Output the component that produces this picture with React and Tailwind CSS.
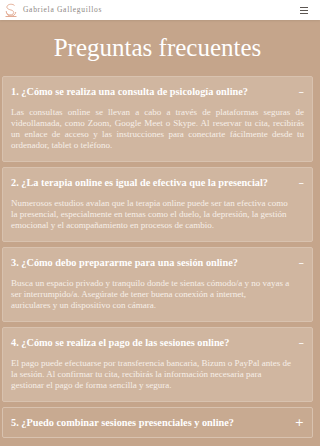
import { useState } from "react"

const faqs = [
	{
		q: "1. ¿Cómo se realiza una consulta de psicología online?",
		a: [
			"Las consultas online se llevan a cabo a través de plataformas seguras de",
			"videollamada, como Zoom, Google Meet o Skype. Al reservar tu cita, recibirás",
			"un enlace de acceso y las instrucciones para conectarte fácilmente desde tu",
			"ordenador, tablet o teléfono.",
		],
		justify: true,
	},
	{
		q: "2. ¿La terapia online es igual de efectiva que la presencial?",
		a: [
			"Numerosos estudios avalan que la terapia online puede ser tan efectiva como",
			"la presencial, especialmente en temas como el duelo, la depresión, la gestión",
			"emocional y el acompañamiento en procesos de cambio.",
		],
	},
	{
		q: "3. ¿Cómo debo prepararme para una sesión online?",
		a: [
			"Busca un espacio privado y tranquilo donde te sientas cómodo/a y no vayas a",
			"ser interrumpido/a. Asegúrate de tener buena conexión a internet,",
			"auriculares y un dispositivo con cámara.",
		],
	},
	{
		q: "4. ¿Cómo se realiza el pago de las sesiones online?",
		a: [
			"El pago puede efectuarse por transferencia bancaria, Bizum o PayPal antes de",
			"la sesión. Al confirmar tu cita, recibirás la información necesaria para",
			"gestionar el pago de forma sencilla y segura.",
		],
	},
	{
		q: "5. ¿Puedo combinar sesiones presenciales y online?",
		a: ["Sí, puedes alternar sesiones presenciales y online según tus necesidades."],
	},
]

function Logo() {
	return (
		<svg width="12" height="14" viewBox="0 0 12 14" fill="none" stroke="#e3ab93" strokeWidth="1">
			<path d="M9.5 2.5 C8 0.8 3 0.6 2 3.5 C1.3 5.5 4 6.5 6 7 C8.5 7.6 9.5 9.5 8 11 C6.5 12.5 3 12.3 2 10.5" />
			<path d="M1.2 8 C1.2 11.5 3.5 13 6 13 C8.5 13 10.5 11.5 10.8 9" />
			<path d="M0.5 13.5 H11.5" />
		</svg>
	)
}

function NavBar() {
	return (
		<nav className="bg-white h-[20px] flex items-center justify-between pl-[5px] pr-[12px] shadow-[0_1px_2px_rgba(0,0,0,0.08)] relative">
			<div className="flex items-center">
				<Logo />
				<span className="ml-[6px] text-[7.5px] tracking-[0.7px] text-[#8d8783] font-['Liberation_Serif',serif]">
					Gabriela Galleguillos
				</span>
			</div>
			<button className="flex flex-col gap-[2px] w-[8px]">
				<span className="h-[1px] w-full bg-[#5c5652]" />
				<span className="h-[1px] w-full bg-[#5c5652]" />
				<span className="h-[1px] w-full bg-[#5c5652]" />
			</button>
		</nav>
	)
}

function FaqItem({ item, open, onToggle }) {
	return (
		<div
			className={`border border-[#d8c2af] rounded-[2px] mb-[5px] ${open ? "bg-[#d0b6a0]" : "bg-[#c8aa91]"}`}>
			<button
				onClick={onToggle}
				className="w-full flex items-center justify-between pl-[8px] pr-[8px] h-[29px] text-left">
				<span className="text-white font-bold text-[10.3px] leading-[14px] font-['Liberation_Serif',serif]">
					{item.q}
				</span>
				<span className="text-white text-[11px] leading-none font-['DejaVu_Sans',sans-serif]">
					{open ? "–" : "+"}
				</span>
			</button>
			{open && (
				<p className="px-[8px] pb-[10px] pt-[1px] text-[9px] leading-[11px] text-[#f7efe8] font-['Liberation_Serif',serif]">
					{item.a.map((line, i) => (
						<span
							key={i}
							className={`block whitespace-nowrap ${
								item.justify && i < item.a.length - 1 ? "text-justify [text-align-last:justify]" : ""
							}`}>
							{line}
						</span>
					))}
				</p>
			)}
		</div>
	)
}

export default function App() {
	const [open, setOpen] = useState([true, true, true, true, false])

	return (
		<div className="min-h-[446px] bg-[#c5a58b]">
			<NavBar />
			<div className="w-[315px] px-[2px]">
				<h1 className="text-center text-white text-[25px] leading-[56px] font-['Liberation_Serif',serif]">
					Preguntas frecuentes
				</h1>
				{faqs.map((item, i) => (
					<FaqItem
						key={i}
						item={item}
						open={open[i]}
						onToggle={() => setOpen(open.map((o, j) => (j === i ? !o : o)))}
					/>
				))}
			</div>
		</div>
	)
}
